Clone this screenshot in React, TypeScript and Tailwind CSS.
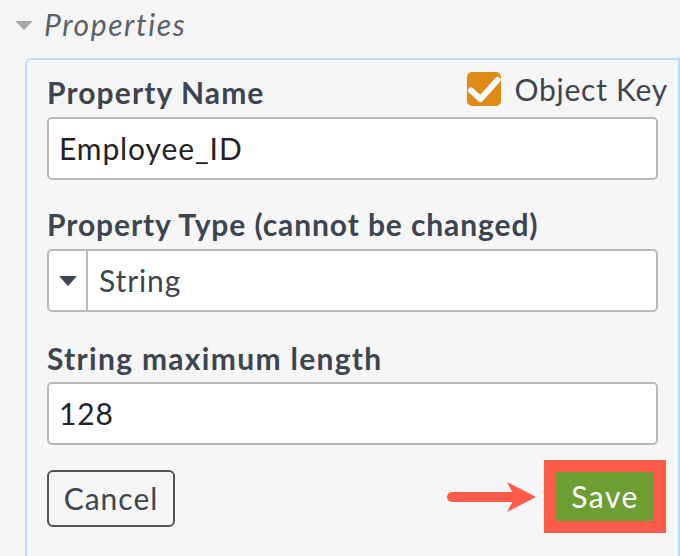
import React from 'react';

const font = { fontFamily: 'Lato, "Open Sans", sans-serif' };

const CheckBox = () => (
  <svg width="34" height="34" viewBox="0 0 34 34">
    <defs>
      <clipPath id="box">
        <rect width="34" height="34" rx="5" />
      </clipPath>
    </defs>
    <rect width="34" height="34" rx="5" fill="#e08a17" />
    <path
      d="M4 18.5 L13.5 27 L30.5 8"
      stroke="#fff"
      strokeWidth="6"
      strokeLinecap="round"
      strokeLinejoin="round"
      fill="none"
      clipPath="url(#box)"
    />
  </svg>
);

const Arrow = () => (
  <svg width="92" height="32" viewBox="0 0 92 32" className="mr-[6px]">
    <line x1="6" y1="16" x2="66" y2="16" stroke="#ff5a4a" strokeWidth="10" strokeLinecap="round" />
    <polygon points="61,1 90,16 61,31 69,16" fill="#ff5a4a" />
  </svg>
);

export default function App() {
  return (
    <div className="h-[556px] w-[680px] overflow-hidden bg-[#f5f5f5] text-[30px] tracking-[0.9px] text-[#3d4650]" style={font}>
      <div className="flex h-[46px] items-center pl-[15px] pt-[2px]">
        <svg width="18" height="9" viewBox="0 0 18 9" className="mr-[11px] mt-[2px]">
          <polygon points="0,0 18,0 9,9" fill="#a9a9a9" />
        </svg>
        <span className="italic leading-[36px] tracking-[1.6px] text-[#5b6169]">Properties</span>
      </div>

      <div className="ml-[25px] mt-[12px] h-[520px] rounded-tl-[6px] border-l-2 border-t-2 border-r-2 border-[#bcdcff] bg-[#f6f6f6] pl-[20px] pr-[20px]">
        <div className="flex items-start justify-between pt-[13px]">
          <label className="mt-[1px] font-bold leading-[36px] tracking-[1.1px]">Property Name</label>
          <div className="-mr-[10px] mt-[-2px] flex items-center gap-[14px]">
            <CheckBox />
            <span className="leading-[36px] tracking-[0.75px]">Object Key</span>
          </div>
        </div>
        <div className="mt-[7px] flex h-[63px] items-center rounded-[5px] border-2 border-[#bcb9b4] bg-white px-[10px] text-[#1f2326]">
          Employee_ID
        </div>

        <label className="mt-[26px] block font-bold leading-[36px]">Property Type (cannot be changed)</label>
        <div className="mt-[7px] flex h-[63px] items-stretch rounded-[5px] border-2 border-[#bcb9b4] bg-white">
          <div className="flex w-[39px] items-center justify-center border-r-2 border-[#bcb9b4]">
            <svg width="18" height="10" viewBox="0 0 18 10">
              <polygon points="0,0 18,0 9,10" fill="#3d4650" />
            </svg>
          </div>
          <div className="flex items-center pl-[11px]">String</div>
        </div>

        <label className="mt-[28px] block font-bold leading-[36px] tracking-[1.3px]">String maximum length</label>
        <div className="mt-[6px] flex h-[63px] items-center rounded-[5px] border-2 border-[#bcb9b4] bg-white px-[10px] text-[#1f2326]">
          128
        </div>

        <div className="mt-[15px] flex items-center justify-between">
          <button className="mt-[4px] h-[57px] w-[128px] rounded-[6px] border-2 border-[#505357] tracking-[1px] text-[#3d4650]">
            Cancel
          </button>
          <div className="-mr-[8px] flex items-center">
            <Arrow />
            <div className="border-[12px] border-[#ff5a4a]">
              <button className="flex h-[49px] w-[98px] items-center justify-center bg-[#6d9e33] tracking-[1.5px] text-white">
                Save
              </button>
            </div>
          </div>
        </div>
      </div>
    </div>
  );
}
